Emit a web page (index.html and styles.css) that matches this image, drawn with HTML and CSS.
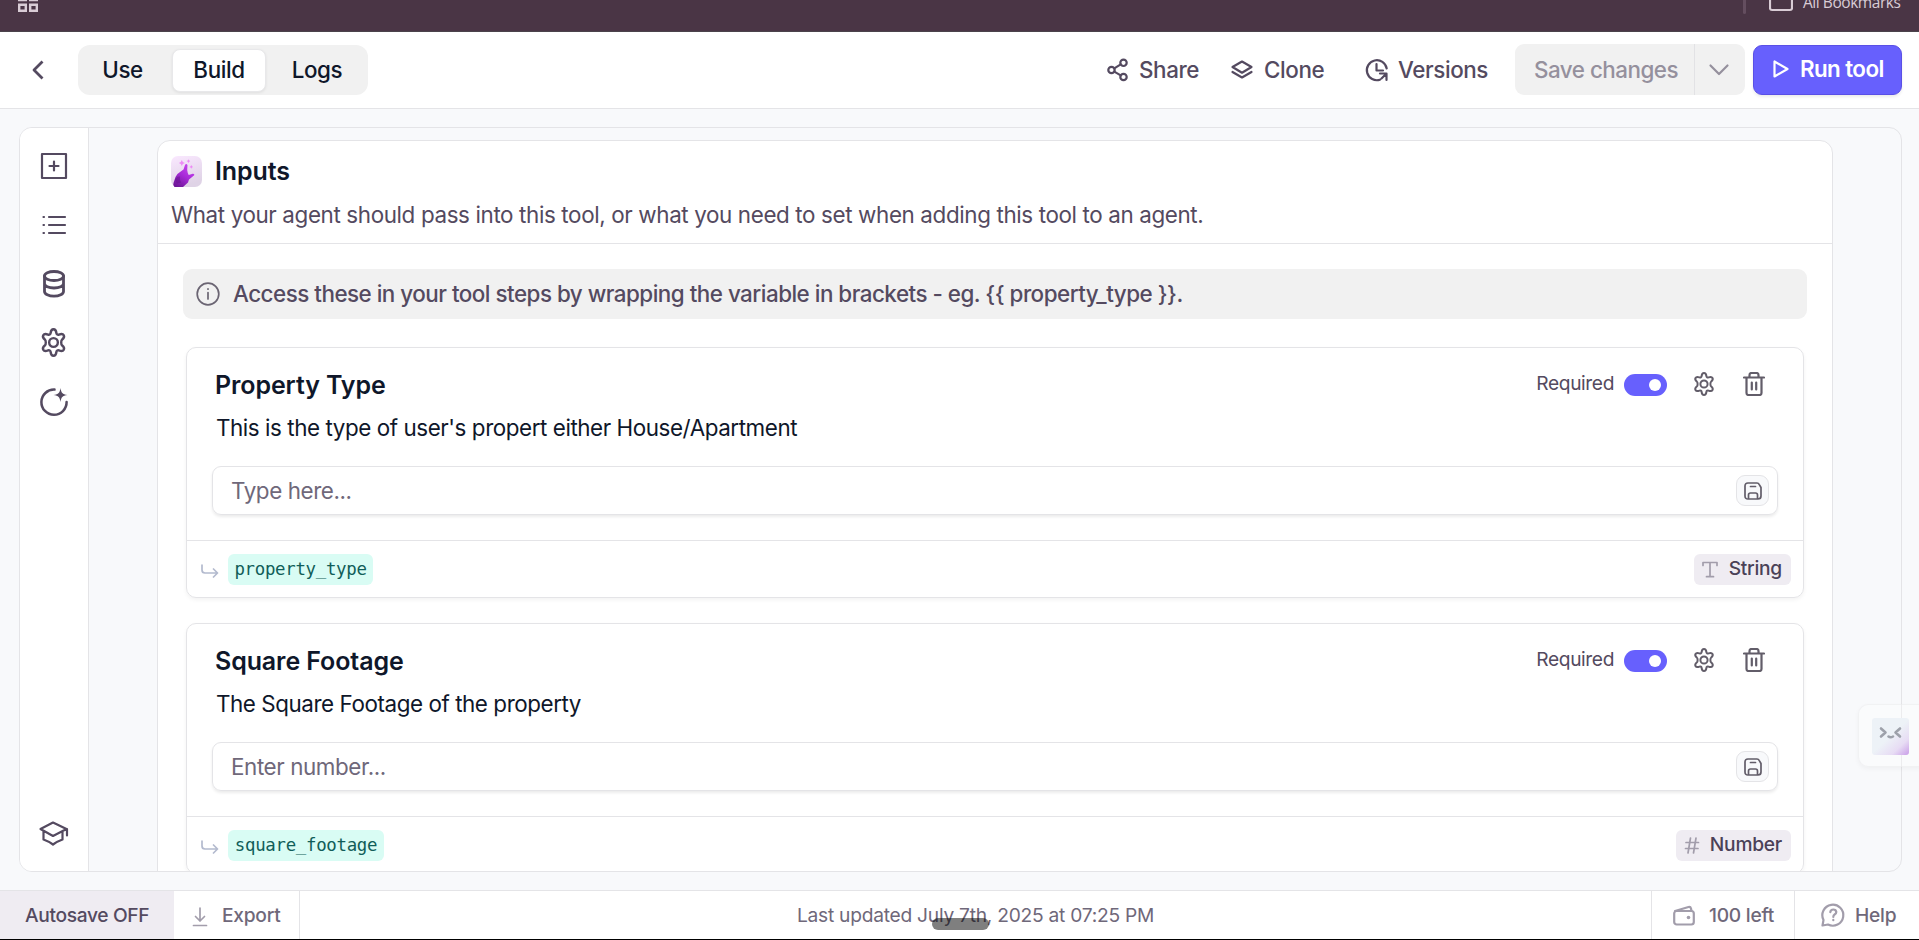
FILE: index.html
```html
<!DOCTYPE html>
<html lang="en">
<head>
<meta charset="utf-8">
<title>Tool builder</title>
<link rel="stylesheet" href="styles.css">
</head>
<body>
<svg class="defs" width="0" height="0">
  <symbol id="gear" viewBox="0 0 24 24"><path d="M9.600 4.200C9.800 2.300 10.600 1 12 1s2.200 1.300 2.400 3.200c.1 1 1.100 1.600 2.100 1.200 1.700-.7 3.300-.7 4 .6s0 2.500-1.500 3.700c-.8.600-.8 4 0 4.600 1.500 1.200 2.200 2.400 1.500 3.700s-2.300 1.300-4 .6c-1-.4-2 .2-2.100 1.200-.2 1.900-1 3.200-2.400 3.200s-2.200-1.300-2.400-3.200c-.1-1-1.100-1.600-2.100-1.200-1.700.7-3.300.7-4-.6s0-2.500 1.500-3.700c.8-.6.8-4 0-4.600C3.500 8.500 2.800 7.300 3.500 6s2.300-1.300 4-.6c1 .4 2-.2 2.100-1.200z"/><circle cx="12" cy="12" r="3.600"/></symbol>
  <symbol id="trash" viewBox="0 0 22 24"><path d="M1 5.500h20M3.500 5.500V21q0 2 2 2h11q2 0 2-2V5.500M6.500 5.500V3q0-2 2-2h5q2 0 2 2v2.500M8.800 10.500v7M13.200 10.500v7"/></symbol>
  <symbol id="disk" viewBox="0 0 18 18"><path d="M4 1h9q1.500 0 2.300 1.600L17 5.500V14q0 3-3 3H4q-3 0-3-3V4q0-3 3-3zM4.500 17v-4q0-2 2-2h5q2 0 2 2v4M6.500 4.500h5"/></symbol>
  <symbol id="turn" viewBox="0 0 18 14"><path d="M1 1v5q0 3 3 3h12M12.500 5l4 4-4 4"/></symbol>
</svg>
<div class="browser">
  <svg class="apps" width="22" height="14" viewBox="0 0 22 14"><path d="M1.200 4.700h6.600v6.100H1.200zM12.200 4.700h6.600v6.100h-6.600zM0 0h9M11 0h9"/></svg>
  <div class="bookmarks"><i></i><svg width="24" height="14" viewBox="0 0 24 14"><path d="M1-3V8q0 2 2 2h18q2 0 2-2V-3"/></svg><span>All Bookmarks</span></div>
</div>
<header class="header">
  <svg class="back" width="12" height="20" viewBox="0 0 12 20"><path d="M10.500 1.500L2 10l8.500 8.500"/></svg>
  <nav class="tabs"><a class="use">Use</a><a class="on">Build</a><a>Logs</a></nav>
  <div class="actions">
    <a class="act share"><svg width="22" height="24" viewBox="0 0 22 24"><circle cx="4.500" cy="12" r="3.200"/><circle cx="16.500" cy="4.800" r="3.200"/><circle cx="16.500" cy="19" r="3.200"/><path d="M7.300 10.400l6.400-4M7.300 13.600l6.400 3.800"/></svg><span>Share</span></a>
    <a class="act clone"><svg width="22" height="20" viewBox="0 0 22 20"><path d="M11 1.500l9.500 5.500-9.500 5.700L1.500 7zM1.500 12l9.500 5.500 9.500-5.500"/></svg><span>Clone</span></a>
    <a class="act versions"><svg width="24" height="24" viewBox="0 0 24 24"><path d="M15 21.700A10 10 0 1 1 21.700 10.500M11.500 6v6.500h6.500M21.500 22v-6.500H15M21 16l-4.500 4.500"/></svg><span>Versions</span></a>
    <div class="save"><span>Save changes</span><b><svg width="20" height="12" viewBox="0 0 20 12"><path d="M1.500 1.500L10 10l8.500-8.500"/></svg></b></div>
    <a class="run"><svg width="16" height="18" viewBox="0 0 16 18"><path d="M1.500 1.500v15L14.500 9z"/></svg><span>Run tool</span></a>
  </div>
</header>
<main class="stage">
  <div class="panel">
    <aside class="side">
      <svg width="26" height="26" viewBox="0 0 26 26"><path d="M1 1h24v24H1zM13 8.500v9M8.500 13h9"/></svg>
      <svg width="24" height="20" viewBox="0 0 24 20"><path d="M7 2h16M7 10h16M7 18h16M1.500 2h.5M1.500 10h.5M1.500 18h.5"/></svg>
      <svg class="thick" width="22" height="28" viewBox="0 0 22 28"><ellipse cx="11" cy="6" rx="9.500" ry="4.500"/><path d="M1.500 6v15.500c0 2.600 4.200 4.700 9.500 4.700s9.500-2.100 9.500-4.700V6M1.500 13.500c0 2.600 4.200 4.500 9.500 4.500s9.500-1.900 9.500-4.500"/></svg>
      <svg class="thin" width="29" height="29"><use href="#gear"/></svg>
      <svg class="orbit" width="28" height="28" viewBox="0 0 28 28"><path d="M14.500 1.600A12.600 12.600 0 1 0 26.600 14"/><path class="fill" d="M20.500 0c.8 5 1.800 6.200 7 7-5.200.8-6.200 2-7 7-.8-5-1.800-6.200-7-7 5.200-.8 6.200-2 7-7z"/></svg>
      <svg class="learn" width="30" height="25" viewBox="0 0 30 25"><path d="M14 1.500L27.500 8 14 15 1.500 8zM4.500 10v8.500Q10 20.500 14 23.500q4-3 9.500-5V10M28 8v6.500"/></svg>
    </aside>
    <div class="canvas">
      <section class="inputs">
        <div class="inputs-head">
          <div class="inputs-title"><svg width="31" height="31" viewBox="0 0 31 31"><defs><linearGradient id="bg" x2=".3" y2="1"><stop stop-color="#fae8ff"/><stop offset="1" stop-color="#dfd3e6"/></linearGradient><linearGradient id="hand" x1=".8" x2=".2" y2="1"><stop stop-color="#c94af0"/><stop offset=".5" stop-color="#a82bd8"/><stop offset="1" stop-color="#6d1697"/></linearGradient></defs><rect width="31" height="31" rx="7" fill="url(#bg)"/><path d="M3.500 31q-2-1.500-1-4l2-6q1-3 4.500-5l3.500-2.500 1.500-4.500q1.200-2 2.500 0l-.3 5q.3 3 1.500 5l4-1.300q2.200-.2 1.500 1.500L18 23.500l-1 3-5 4.500z" fill="url(#hand)"/><path d="M4 24q1.500-4 5-3.500-.5 4 1 6l-4 1z" fill="#64128c" opacity=".5"/><path d="M10.800 4l1 2 2 1-2 1-1 2-1-2-2-1 2-1zM17.500 3.200l.7 1.200 1.200.7-1.200.7-.7 1.200-.7-1.200-1.200-.7 1.200-.7zM20.300 9l.7 1.200 1.200.7-1.200.7-.7 1.200-.7-1.200-1.200-.7 1.200-.7z" fill="#ed8cf5"/></svg><h2>Inputs</h2></div>
          <p>What your agent should pass into this tool, or what you need to set when adding this tool to an agent.</p>
        </div>
        <div class="banner"><svg width="24" height="24" viewBox="0 0 24 24"><circle cx="12" cy="12" r="10.800"/><path d="M12 10.500V17M12 6.800v.4"/></svg><span>Access these in your tool steps by wrapping the variable in brackets - eg. {{ property_type }}.</span></div>
        <article class="field">
          <div class="field-top"><h3>Property Type</h3><div class="ctl"><label>Required</label><i class="toggle"></i><svg class="g" width="24" height="24"><use href="#gear"/></svg><svg class="t" width="22" height="24"><use href="#trash"/></svg></div></div>
          <p class="desc">This is the type of user's propert either House/Apartment</p>
          <div class="entry"><span>Type here...</span><button><svg width="18" height="18"><use href="#disk"/></svg></button></div>
          <div class="field-foot"><svg width="18" height="14"><use href="#turn"/></svg><code class="w1">property_type</code><div class="type"><svg width="16" height="17" viewBox="0 0 16 17"><path d="M1 4.500V1.500h14v3M8 1.500V15.500M4.500 15.700h7"/></svg><span>String</span></div></div>
        </article>
        <article class="field">
          <div class="field-top"><h3>Square Footage</h3><div class="ctl"><label>Required</label><i class="toggle"></i><svg class="g" width="24" height="24"><use href="#gear"/></svg><svg class="t" width="22" height="24"><use href="#trash"/></svg></div></div>
          <p class="desc">The Square Footage of the property</p>
          <div class="entry"><span>Enter number...</span><button><svg width="18" height="18"><use href="#disk"/></svg></button></div>
          <div class="field-foot"><svg width="18" height="14"><use href="#turn"/></svg><code class="w2">square_footage</code><div class="type num"><svg width="14" height="17" viewBox="0 0 14 17"><path d="M5.500 1L3 16M11 1L8.500 16M1 5.500h12.500M.5 11.500H13"/></svg><span>Number</span></div></div>
        </article>
      </section>
    </div>
  </div>
</main>
<footer class="footer">
  <div class="auto"><span>Autosave OFF</span></div>
  <div class="export"><svg width="14" height="20" viewBox="0 0 14 20"><path d="M7 1v13M2.500 9.500L7 14l4.500-4.500M.5 18.500h13"/></svg><span>Export</span></div>
  <div class="updated"><span>Last updated July 7th, 2025 at 07:25 PM</span></div>
  <div class="credits"><svg width="22" height="21" viewBox="0 0 22 21"><rect x="1.200" y="6" width="19.600" height="13.500" rx="2.500"/><path d="M2 6l13.500-4q2-.5 2.500 1.500L18.500 6"/><circle class="dot" cx="15.500" cy="12.500" r="1.800"/></svg><span>100 left</span></div>
  <div class="help"><svg width="24" height="24" viewBox="0 0 24 24"><path d="M1.500 22.500l1-5.500A10.500 10.500 0 1 1 7 21.500zM9.300 9.200q.3-2.700 3-2.700t3 2.500q0 1.500-1.700 2.500-1.300.8-1.300 2.500M12.300 16.800v.4"/></svg><span>Help</span></div>
</footer>
<div class="assistant"><svg width="37" height="37" viewBox="0 0 37 37"><defs><linearGradient id="face" x1=".25" y1=".2" x2="1" y2="1"><stop offset=".35" stop-color="#edf2f7"/><stop offset=".7" stop-color="#e7dcf4"/><stop offset="1" stop-color="#c99de8"/></linearGradient></defs><rect width="37" height="37" rx="3" fill="url(#face)" stroke="none"/><path d="M9 10.500l4.500 4-4.500 4M28 10.500l-4.500 4 4.500 4M16.500 18.500q2 1.500 4.500 0"/></svg></div>
<div class="grip"></div>
</body>
</html>
```
FILE: styles.css
```css
* { box-sizing: border-box; }
body {
  margin: 0; width: 1919px; height: 940px; overflow: hidden;
  display: flex; flex-direction: column;
  background: #f8f9fb; color: #0f172a;
  font-family: Inter, sans-serif; font-size: 22.4px; line-height: 32px; letter-spacing: -.4px;
  border-bottom: 1px solid #000; position: relative;
}
svg { display: block; flex: none; fill: none; stroke: #544a60; stroke-width: 2.200; stroke-linecap: round; stroke-linejoin: round; overflow: visible; }
.defs { position: absolute; }
h2, h3, p { margin: 0; }
span, label { white-space: nowrap; }

.browser { height: 32px; flex: none; background: #4a3545; border-bottom: 1px solid #4b434b; display: flex; justify-content: space-between; padding: 0 19px 0 18px; overflow: hidden; }
.browser svg { stroke: #d9ccd5; stroke-linecap: butt; stroke-linejoin: miter; overflow: hidden; }
.apps { stroke-width: 2.400; }
.bookmarks { display: flex; align-items: flex-start; color: #d9ccd5; font: 15.500px/20px "Open Sans", sans-serif; }
.bookmarks i { width: 3px; height: 14px; background: #644e5f; border-radius: 0 0 2px 2px; margin-right: 23px; }
.bookmarks svg { margin-right: 10px; }
.bookmarks span { width: 97px; margin-top: -8px; letter-spacing: -.45px; }

.header { height: 77px; flex: none; background: #fff; border-bottom: 1px solid #e4e4e7; display: flex; align-items: center; padding: 0 17px 0 32px; }
.back { stroke-width: 2.8; margin: 0 34px 0 0; stroke-linecap: butt; }
.tabs { width: 290px; height: 50px; background: #f1f1f1; border-radius: 12px; display: flex; align-items: center; }
.tabs a { flex: 1; height: 43px; line-height: 42px; text-align: center; font-weight: 500; }
.tabs .use { flex: none; width: 94px; padding-right: 5px; }
.tabs .on { flex: none; width: 94px; background: #fff; border: 1px solid #e8e8ea; border-radius: 8px; line-height: 40px; box-shadow: 0 1px 3px rgba(0,0,0,.08); }
.actions { margin-left: auto; display: flex; align-items: center; }
.act { display: flex; align-items: center; color: #544a60; font-weight: 500; }
.share { width: 124px; gap: 10px; }
.clone { width: 134px; gap: 11px; }
.versions { width: 150px; gap: 9px; }
.save { width: 230px; height: 51px; border-radius: 9px; background: #f1f1f1; color: #95909d; display: flex; align-items: center; margin: 0 8px 1px 0; font-weight: 500; letter-spacing: -.5px; }
.save span { width: 179px; padding-left: 19px; }
.save b { width: 51px; height: 51px; border-left: 1px solid #e2e2e5; display: flex; align-items: center; padding-left: 14px; }
.save svg { stroke: #95909d; }
.run { width: 149px; height: 50px; border-radius: 9px; background: #6760fd; border: 1px solid #5a50e6; color: #fff; font-weight: 600; letter-spacing: -.6px; display: flex; align-items: center; gap: 11px; padding: 0 0 2px 19px; box-shadow: 0 2px 3px rgba(0,0,0,.08); }
.run svg { stroke: #fff; }

.stage { height: 781px; flex: none; padding: 18px 17px 18px 19px; }
.panel { height: 745px; border: 1px solid #e4e4e7; border-radius: 13px; overflow: hidden; display: flex; }
.side { width: 69px; flex: none; background: #fff; border-right: 1px solid #e4e4e7; display: grid; grid-template-rows: repeat(5, 59px) 1fr 76px; justify-items: center; align-items: center; padding: 8px 1px 0 0; }
.side .thick { stroke-width: 2.8; }
.side .thin { stroke-width: 2; }
.side .orbit { stroke-width: 2.500; }
.side .fill { fill: #544a60; stroke: none; }
.side .learn { grid-row: 7; }
.canvas { flex: 1; padding: 12px 68px 0 68px; }
.inputs { height: 800px; background: #fff; border: 1px solid #e4e4e7; border-radius: 13px; display: flex; flex-direction: column; }
.inputs-head { height: 103px; flex: none; border-bottom: 1px solid #e4e4e7; padding: 15px 13px 0; color: #544a60; letter-spacing: -.370px; }
.inputs-title { display: flex; align-items: center; gap: 13px; height: 31px; }
.inputs-title svg { stroke: none; overflow: hidden; }
h2, h3 { font-size: 25px; font-weight: 600; color: #0f172a; letter-spacing: -.1px; }
h2 { margin-top: -1px; }
.inputs-head p { margin-top: 12px; }
.banner { height: 50px; flex: none; margin: 25px 25px 28px; background: #f1f1f1; border-radius: 9px; display: flex; align-items: center; padding-left: 13px; gap: 13px; color: #544a60; font-weight: 500; letter-spacing: -.5px; }
.banner svg { stroke-width: 1.700; stroke: #6b6573; }
.field { height: 251px; flex: none; margin: 0 28px 25px; border: 1px solid #e4e4e7; border-radius: 10px; box-shadow: 0 2px 4px rgba(0,0,0,.05); display: flex; flex-direction: column; }
.field-top { height: 62px; padding: 21px 38px 0 28px; display: flex; justify-content: space-between; }
.ctl { display: flex; align-items: center; height: 32px; margin-top: -1px; color: #544a60; font-size: 19.2px; }
.ctl label { margin-top: -2px; }
.ctl svg { stroke: #625d69; }
.ctl .g { stroke-width: 2; }
.toggle { width: 43px; height: 22px; border-radius: 11px; background: #6760fd; display: flex; align-items: center; justify-content: flex-end; padding-right: 6px; margin: 1px 25px 0 10px; }
.toggle::before { content: ""; width: 12px; height: 12px; border-radius: 50%; background: #fff; }
.ctl .g { margin-right: 27px; }
.desc { height: 56px; padding: 2px 29px; letter-spacing: -.430px; }
.entry { height: 49px; margin: 0 25px 25px; border: 1px solid #e4e4e7; border-radius: 9px; box-shadow: 0 2px 3px rgba(0,0,0,.08); display: flex; align-items: center; justify-content: space-between; padding: 0 8px 0 18px; color: #6f687a; }
.entry button { width: 33px; height: 31px; padding: 0; background: #f8f9fb; border: 1px solid #e4e4e7; border-radius: 9px; display: flex; align-items: center; justify-content: center; }
.entry button svg { stroke: #625d69; stroke-width: 1.700; }
.field-foot { height: 57px; border-top: 1px solid #e4e4e7; padding: 0 12px 0 14px; display: flex; align-items: center; }
.field-foot > svg { stroke: #b3bace; stroke-width: 1.700; margin-top: 3px; }
code { height: 31px; margin-left: 9px; background: #d9fcf4; color: #115e59; border-radius: 6px; text-align: center; font: 17.400px/30px "DejaVu Sans Mono", monospace; letter-spacing: -.3px; }
.w1 { width: 145px; }
.w2 { width: 156px; }
.type { margin-left: auto; width: 97px; height: 31px; border-radius: 6px; background: #efecf2; color: #4a4157; font-size: 19.200px; line-height: 29px; font-weight: 500; letter-spacing: -.25px; display: flex; justify-content: space-between; padding: 0 9px 0 8px; }
.type svg { stroke: #a29dab; stroke-width: 1.700; margin-top: 7px; }
.num { width: 115px; padding-left: 9px; }

.footer { height: 49px; flex: none; background: #fff; border-top: 1px solid #e4e4e7; display: flex; color: #6f687a; font-size: 19.200px; font-weight: 500; letter-spacing: -.250px; }
.footer > div { display: flex; align-items: center; }
.footer svg { stroke: #a29dab; }
.auto { width: 174px; background: #efecf2; color: #544a60; padding-left: 25px; letter-spacing: -.35px; }
.export { width: 126px; border-right: 1px solid #e4e4e7; padding-left: 19px; gap: 15px; }
.export svg { stroke-width: 1.700; margin-top: 4px; }
.updated { flex: 1; justify-content: center; font-weight: 400; }
.credits { width: 144px; border: solid #e4e4e7; border-width: 0 1px; padding-left: 21px; gap: 14px; }
.credits .dot { fill: #a29dab; stroke: none; }
.help { width: 124px; padding-left: 26px; gap: 10px; }

.assistant { position: absolute; left: 1858px; top: 704px; width: 70px; height: 63px; padding: 13px; border-radius: 10px; border: 1px solid rgba(228,228,231,.4); background: rgba(255,255,255,.3); box-shadow: 0 2px 5px rgba(0,0,0,.04); }
.assistant svg { stroke: #9da1aa; stroke-width: 2.600; }
.grip { position: absolute; left: 932px; top: 918px; width: 57px; height: 12px; border-radius: 6px; background: rgba(0,0,0,.5); }
```
